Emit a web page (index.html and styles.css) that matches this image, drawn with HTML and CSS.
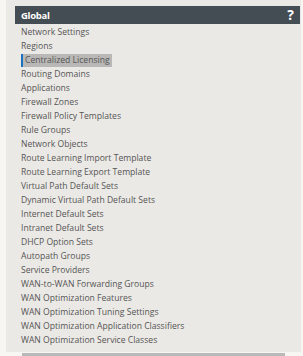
FILE: index.html
```html
<!DOCTYPE html>
<html>
<head>
<meta charset="utf-8">
<link rel="stylesheet" href="styles.css">
</head>
<body>
<div class="page">
  <div class="panel">
    <div class="header">
      <span class="title">Global</span>
      <span class="help">?</span>
    </div>
    <ul class="menu">
      <li>Network Settings</li>
      <li>Regions</li>
      <li class="active"><span>Centralized Licensing</span></li>
      <li>Routing Domains</li>
      <li>Applications</li>
      <li>Firewall Zones</li>
      <li>Firewall Policy Templates</li>
      <li>Rule Groups</li>
      <li>Network Objects</li>
      <li>Route Learning Import Template</li>
      <li>Route Learning Export Template</li>
      <li>Virtual Path Default Sets</li>
      <li>Dynamic Virtual Path Default Sets</li>
      <li>Internet Default Sets</li>
      <li>Intranet Default Sets</li>
      <li>DHCP Option Sets</li>
      <li>Autopath Groups</li>
      <li>Service Providers</li>
      <li>WAN-to-WAN Forwarding Groups</li>
      <li>WAN Optimization Features</li>
      <li>WAN Optimization Tuning Settings</li>
      <li>WAN Optimization Application Classifiers</li>
      <li>WAN Optimization Service Classes</li>
    </ul>
  </div>
  <div class="scrollbar"></div>
</div>
</body>
</html>
```
FILE: styles.css
```css
html, body {
  margin: 0;
  padding: 0;
  background: #f7f6f3;
  width: 303px;
  height: 356px;
  overflow: hidden;
}
.page {
  padding-left: 6px;
  font-family: "Open Sans", "Noto Sans", sans-serif;
}
.panel {
  background: #ebe9e5;
  width: 295px;
  height: 352px;
  padding: 6px 0 0 9px;
  box-sizing: border-box;
  margin-right: 2px;
}
.header {
  width: 285px;
  height: 18px;
  background: #444c54;
  display: flex;
  align-items: center;
  justify-content: space-between;
  padding: 0 6px 0 6px;
  box-sizing: border-box;
  color: #ffffff;
}
.title {
  font-size: 9.5px;
  font-weight: 700;
  letter-spacing: -0.3px;
}
.help {
  font-size: 14px;
  font-weight: 700;
  line-height: 14px;
}
.menu {
  list-style: none;
  margin: 0;
  padding: 1px 0 0 6px;
}
.menu li {
  height: 14px;
  line-height: 14px;
  font-size: 8.6px;
  color: #555555;
  white-space: nowrap;
}
.menu li.active span {
  display: inline-block;
  background: #b9b8b6;
  border-left: 2px solid #1a73c0;
  padding: 0 2px 0 2px;
  line-height: 13px;
}
.scrollbar {
  margin: 1px 0 0 16px;
  width: 263px;
  height: 3px;
  background: #b9b9b9;
}
```
